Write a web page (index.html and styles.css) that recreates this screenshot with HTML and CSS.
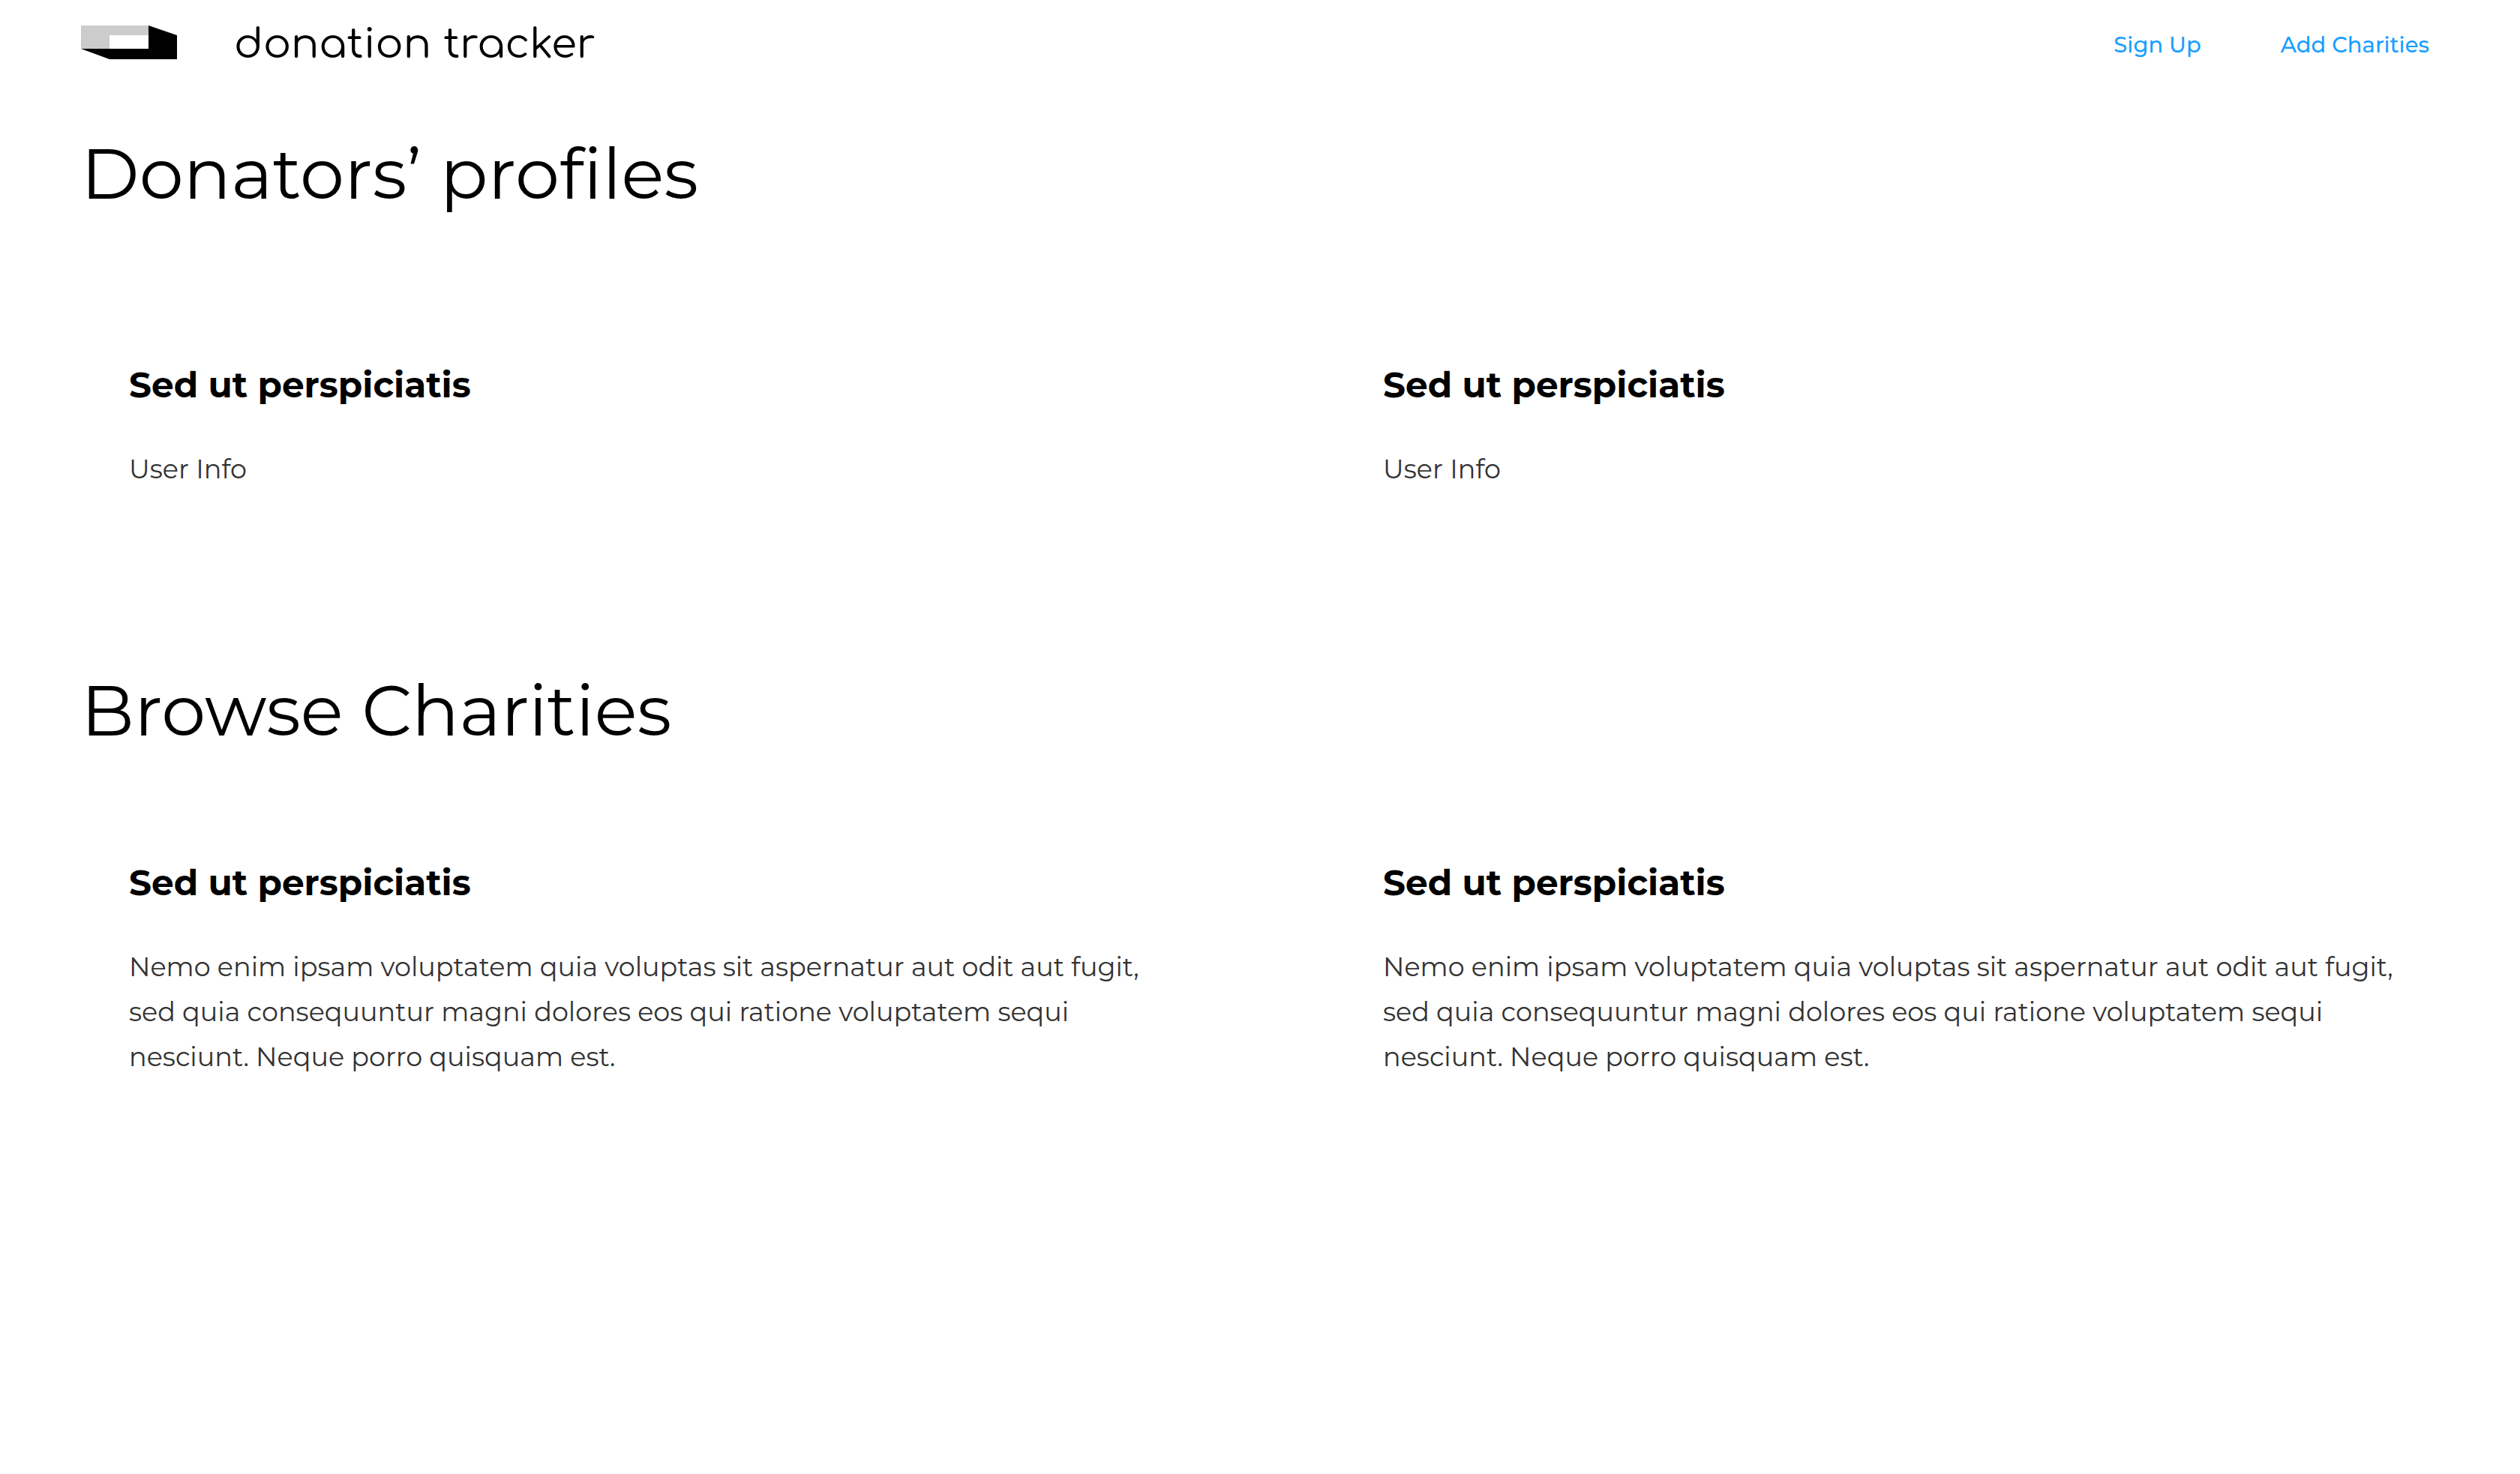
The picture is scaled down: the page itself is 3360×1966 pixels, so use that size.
FILE: index.html
```html
<!DOCTYPE html>
<html lang="en">
<head>
<meta charset="utf-8">
<meta name="viewport" content="width=device-width, initial-scale=1">
<title>donation tracker</title>
<link rel="stylesheet" href="styles.css">
</head>
<body>
<header class="site-header">
  <a class="brand" href="#">
    <svg class="brand-mark" viewBox="0 0 128 45" aria-hidden="true">
      <path d="M0 0H90V13H38V31H0Z" fill="#ccc"/>
      <path d="M90 0L128 13V45H38L0 31H90Z" fill="#000"/>
    </svg>
    <span class="brand-name">donation tracker</span>
  </a>
  <nav class="site-nav">
    <a href="#signup">Sign Up</a>
    <a href="#add">Add Charities</a>
  </nav>
</header>
<main>
  <section class="section profiles">
    <h1 class="section-title">Donators’ profiles</h1>
    <div class="cards">
      <article class="card">
        <h2 class="card-title">Sed ut perspiciatis</h2>
        <p class="card-text">User Info</p>
      </article>
      <article class="card">
        <h2 class="card-title">Sed ut perspiciatis</h2>
        <p class="card-text">User Info</p>
      </article>
    </div>
  </section>
  <section class="section charities">
    <h1 class="section-title">Browse Charities</h1>
    <div class="cards">
      <article class="card">
        <h2 class="card-title">Sed ut perspiciatis</h2>
        <p class="card-text">Nemo enim ipsam voluptatem quia voluptas sit aspernatur aut odit aut fugit, sed quia consequuntur magni dolores eos qui ratione voluptatem sequi nesciunt. Neque porro quisquam est.</p>
      </article>
      <article class="card">
        <h2 class="card-title">Sed ut perspiciatis</h2>
        <p class="card-text">Nemo enim ipsam voluptatem quia voluptas sit aspernatur aut odit aut fugit, sed quia consequuntur magni dolores eos qui ratione voluptatem sequi nesciunt. Neque porro quisquam est.</p>
      </article>
    </div>
  </section>
</main>
</body>
</html>
```
FILE: styles.css
```css
* {
  box-sizing: border-box;
}

body {
  margin: 0;
  background: #fff;
  color: #000;
  font-family: Montserrat, Inter, sans-serif;
  font-variant-ligatures: none;
}

h1, h2, p {
  margin: 0;
}

.site-header {
  display: flex;
  align-items: center;
  justify-content: space-between;
  height: 112px;
  padding: 0 121px 0 108px;
}

.brand {
  display: flex;
  align-items: center;
  gap: 76px;
  color: #000;
  text-decoration: none;
}

.brand-mark {
  width: 128px;
  height: 45px;
}

.brand-name {
  padding-top: 8px;
  font-family: Comfortaa, Lato, sans-serif;
  font-size: 55px;
  line-height: 72px;
}

.site-nav {
  display: flex;
  gap: 106px;
  padding-top: 8px;
}

.site-nav a {
  color: #1a9fff;
  font-size: 29px;
  font-weight: 500;
  line-height: 40px;
  text-decoration: none;
}

.section {
  display: flex;
  flex-direction: column;
  padding: 0 112px 0 108px;
}

.profiles {
  gap: 192px;
  padding-top: 60px;
}

.charities {
  gap: 140px;
  padding-top: 232px;
}

.section-title {
  font-size: 94px;
  font-weight: 400;
  line-height: 120px;
}

.cards {
  display: grid;
  grid-template-columns: 1fr 1fr;
  gap: 204px;
}

.card {
  display: flex;
  flex-direction: column;
  gap: 52px;
  padding: 0 36px 0 64px;
}

.card-title {
  font-size: 47px;
  font-weight: 700;
  line-height: 60px;
}

.card-text {
  color: #333;
  font-size: 35px;
  font-weight: 400;
  line-height: 60px;
}
```
